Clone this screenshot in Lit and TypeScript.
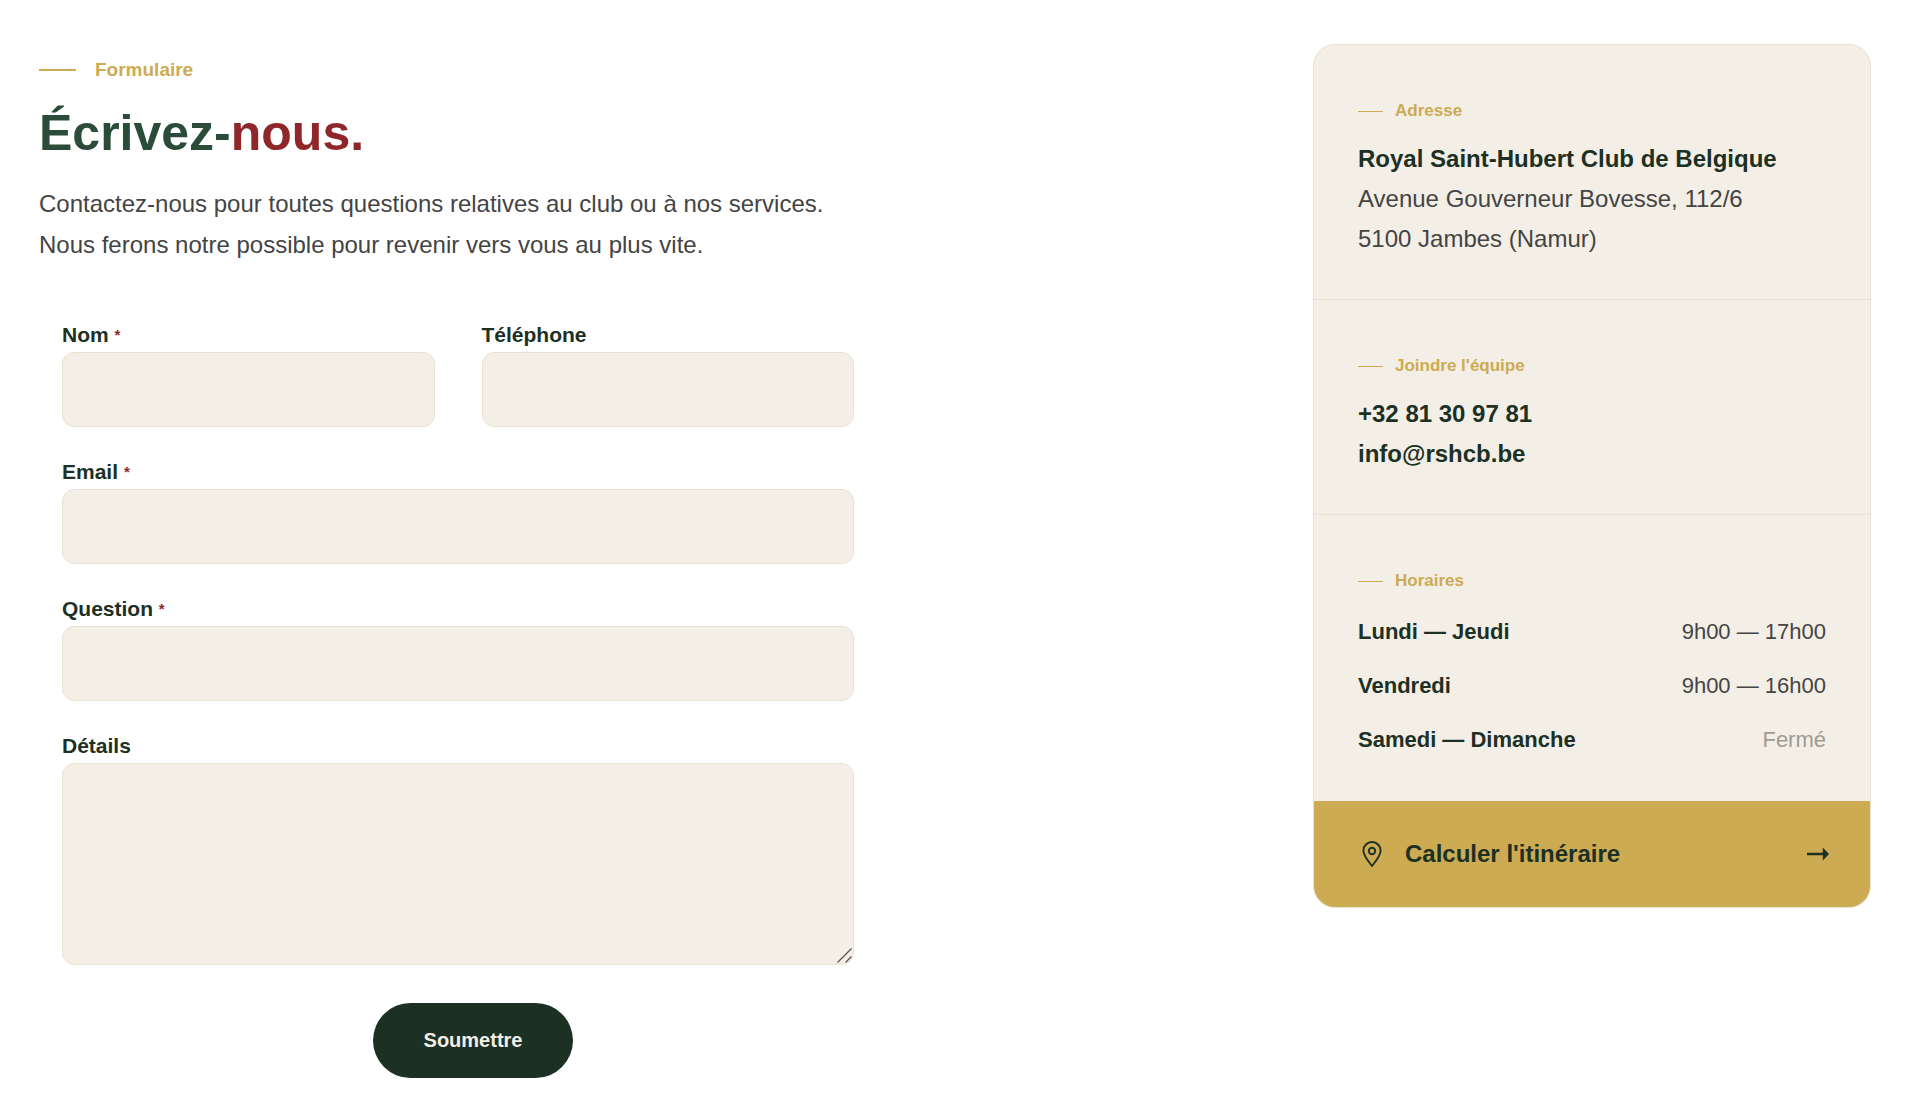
import { LitElement, css, html, nothing } from "lit";
import { customElement, property } from "lit/decorators.js";

@customElement("section-eyebrow")
class SectionEyebrow extends LitElement {
  static styles = css`
    :host {
      display: flex;
      align-items: center;
      gap: 12px;
      color: #ccab53;
      font-size: 17px;
      font-weight: 700;
      line-height: 24px;
    }
    .rule {
      width: 25px;
      height: 1px;
      background: currentColor;
    }
    :host([large]) {
      gap: 19px;
      font-size: 19px;
    }
    :host([large]) .rule {
      width: 37px;
      height: 2px;
    }
  `;

  render() {
    return html`<span class="rule"></span><span><slot></slot></span>`;
  }
}

@customElement("contact-form")
class ContactForm extends LitElement {
  static styles = css`
    :host {
      display: block;
    }
    .fields {
      display: grid;
      grid-template-columns: 1fr 1fr;
      column-gap: 47px;
      row-gap: 31px;
      padding: 0 53px 0 23px;
    }
    .field {
      display: flex;
      flex-direction: column;
      gap: 4px;
    }
    .wide {
      grid-column: 1 / -1;
    }
    label {
      color: #1c3024;
      font-size: 21px;
      font-weight: 700;
      line-height: 27px;
    }
    .required {
      color: #8f272a;
      font-size: 15px;
      line-height: 1;
      vertical-align: 2px;
    }
    input,
    textarea {
      box-sizing: border-box;
      width: 100%;
      height: 75px;
      margin: 0;
      padding: 16px 20px;
      border: 1px solid #e8e2d3;
      border-radius: 12px;
      outline: none;
      background: #f4efe6;
      color: #1c3024;
      font: inherit;
      font-size: 21px;
    }
    textarea {
      display: block;
      height: 202px;
      resize: vertical;
    }
    textarea::-webkit-resizer {
      background: transparent;
    }
    .resizable {
      position: relative;
    }
    .grip {
      position: absolute;
      right: 2px;
      bottom: 2px;
      width: 16px;
      height: 16px;
      pointer-events: none;
    }
    input:focus,
    textarea:focus {
      border-color: #ccab53;
    }
    .actions {
      display: flex;
      justify-content: center;
      margin-top: 38px;
    }
    button {
      padding: 0 51px;
      border: 0;
      border-radius: 38px;
      background: #1c3024;
      color: #f4efe6;
      font: inherit;
      font-size: 20px;
      font-weight: 700;
      line-height: 75px;
      cursor: pointer;
    }
  `;

  private label(id: string, text: string, required: boolean) {
    return html`<label for=${id}
      >${text}${required ? html` <span class="required">*</span>` : nothing}</label
    >`;
  }

  private input(id: string, text: string, type: string, required: boolean, wide: boolean) {
    return html`<div class="field ${wide ? "wide" : ""}">
      ${this.label(id, text, required)}
      <input id=${id} name=${id} type=${type} ?required=${required} />
    </div>`;
  }

  render() {
    return html`<form @submit=${(e: Event) => e.preventDefault()}>
      <div class="fields">
        ${this.input("nom", "Nom", "text", true, false)}
        ${this.input("telephone", "Téléphone", "tel", false, false)}
        ${this.input("email", "Email", "email", true, true)}
        ${this.input("question", "Question", "text", true, true)}
        <div class="field wide">
          ${this.label("details", "Détails", false)}
          <div class="resizable">
            <textarea id="details" name="details"></textarea>
            <svg class="grip" viewBox="0 0 16 16" fill="none" stroke="#5c5a57" stroke-width="1.4" aria-hidden="true">
              <path d="M1.5 15.5L15.5 1.5M9.5 15.5L15.5 9.5" />
            </svg>
          </div>
        </div>
      </div>
      <div class="actions"><button type="submit">Soumettre</button></div>
    </form>`;
  }
}

interface Opening {
  days: string;
  hours: string;
  closed?: boolean;
}

@customElement("contact-card")
class ContactCard extends LitElement {
  @property({ attribute: false }) openings: Opening[] = [
    { days: "Lundi — Jeudi", hours: "9h00 — 17h00" },
    { days: "Vendredi", hours: "9h00 — 16h00" },
    { days: "Samedi — Dimanche", hours: "Fermé", closed: true },
  ];

  static styles = css`
    :host {
      display: block;
      overflow: hidden;
      border: 1px solid #e8e2d3;
      border-radius: 22px;
      background: #f4efe6;
      color: #444444;
      font-size: 24px;
      line-height: 40px;
    }
    section {
      padding: 54px 44px 40px;
    }
    section + section {
      border-top: 1px solid #e8e2d3;
    }
    address {
      margin-top: 16px;
      font-style: normal;
    }
    strong,
    .contact {
      display: block;
      color: #1c3024;
      font-weight: 700;
      text-decoration: none;
    }
    .hours {
      padding-bottom: 34px;
    }
    table {
      width: 100%;
      margin-top: 12px;
      border-collapse: collapse;
      font-size: 22px;
      line-height: 54px;
    }
    th,
    td {
      padding: 0;
      font-weight: 400;
      text-align: right;
    }
    th {
      color: #1c3024;
      font-weight: 700;
      text-align: left;
    }
    .closed {
      color: #9f9b94;
    }
    .route {
      display: flex;
      align-items: center;
      padding: 33px 41px 33px 44px;
      background: #ccab53;
      color: #1c3024;
      font-weight: 700;
      text-decoration: none;
    }
    .pin {
      width: 28px;
      height: 28px;
      margin-right: 19px;
    }
    .arrow {
      width: 22px;
      height: 14px;
      margin-left: auto;
    }
  `;

  render() {
    return html`
      <section>
        <section-eyebrow>Adresse</section-eyebrow>
        <address>
          <strong>Royal Saint-Hubert Club de Belgique</strong>
          Avenue Gouverneur Bovesse, 112/6<br />5100 Jambes (Namur)
        </address>
      </section>
      <section>
        <section-eyebrow>Joindre l'équipe</section-eyebrow>
        <address>
          <a class="contact" href="tel:+3281309781">+32 81 30 97 81</a>
          <a class="contact" href="mailto:info@rshcb.be">info@rshcb.be</a>
        </address>
      </section>
      <section class="hours">
        <section-eyebrow>Horaires</section-eyebrow>
        <table>
          <tbody>
            ${this.openings.map(
              (o) => html`<tr>
                <th scope="row">${o.days}</th>
                <td class=${o.closed ? "closed" : ""}>${o.hours}</td>
              </tr>`
            )}
          </tbody>
        </table>
      </section>
      <a class="route" href="#itineraire">
        <svg class="pin" viewBox="0 0 28 28" fill="none" stroke="currentColor" stroke-width="1.9" aria-hidden="true">
          <path d="M14 26C11.5 22.5 5.4 16.5 5.4 10.6A8.6 8.6 0 0 1 22.6 10.6C22.6 16.5 16.5 22.5 14 26Z" stroke-linejoin="round" />
          <circle cx="14" cy="11" r="3.2" />
        </svg>
        <span>Calculer l'itinéraire</span>
        <svg class="arrow" viewBox="0 0 22 14" fill="currentColor" aria-hidden="true">
          <path d="M0 5.7H15.8V0.4L22 7L15.8 13.6V8.3H0Z" />
        </svg>
      </a>
    `;
  }
}

@customElement("app-root")
class AppRoot extends LitElement {
  static styles = css`
    :host {
      display: block;
      background: #ffffff;
      font-family: "Liberation Sans", Helvetica, Arial, sans-serif;
    }
    .page {
      display: grid;
      grid-template-columns: minmax(0, 868px) minmax(0, 558px);
      justify-content: space-between;
      align-items: start;
      gap: 40px;
      padding: 44px 49px 29px 39px;
    }
    .intro {
      padding-top: 14px;
    }
    h1 {
      margin: 17px 0 0;
      color: #2b4c39;
      font-size: 50px;
      font-weight: 700;
      line-height: 68px;
    }
    .accent {
      color: #8f272a;
    }
    .lead {
      margin: 16px 0 56px;
      color: #444444;
      font-size: 24px;
      line-height: 41px;
    }
    @media (max-width: 1100px) {
      .page {
        grid-template-columns: minmax(0, 1fr);
      }
    }
  `;

  render() {
    return html`<main class="page">
      <div class="intro">
        <section-eyebrow large>Formulaire</section-eyebrow>
        <h1>Écrivez-<span class="accent">nous.</span></h1>
        <p class="lead">
          Contactez-nous pour toutes questions relatives au club ou à nos services.<br />
          Nous ferons notre possible pour revenir vers vous au plus vite.
        </p>
        <contact-form></contact-form>
      </div>
      <contact-card></contact-card>
    </main>`;
  }
}
